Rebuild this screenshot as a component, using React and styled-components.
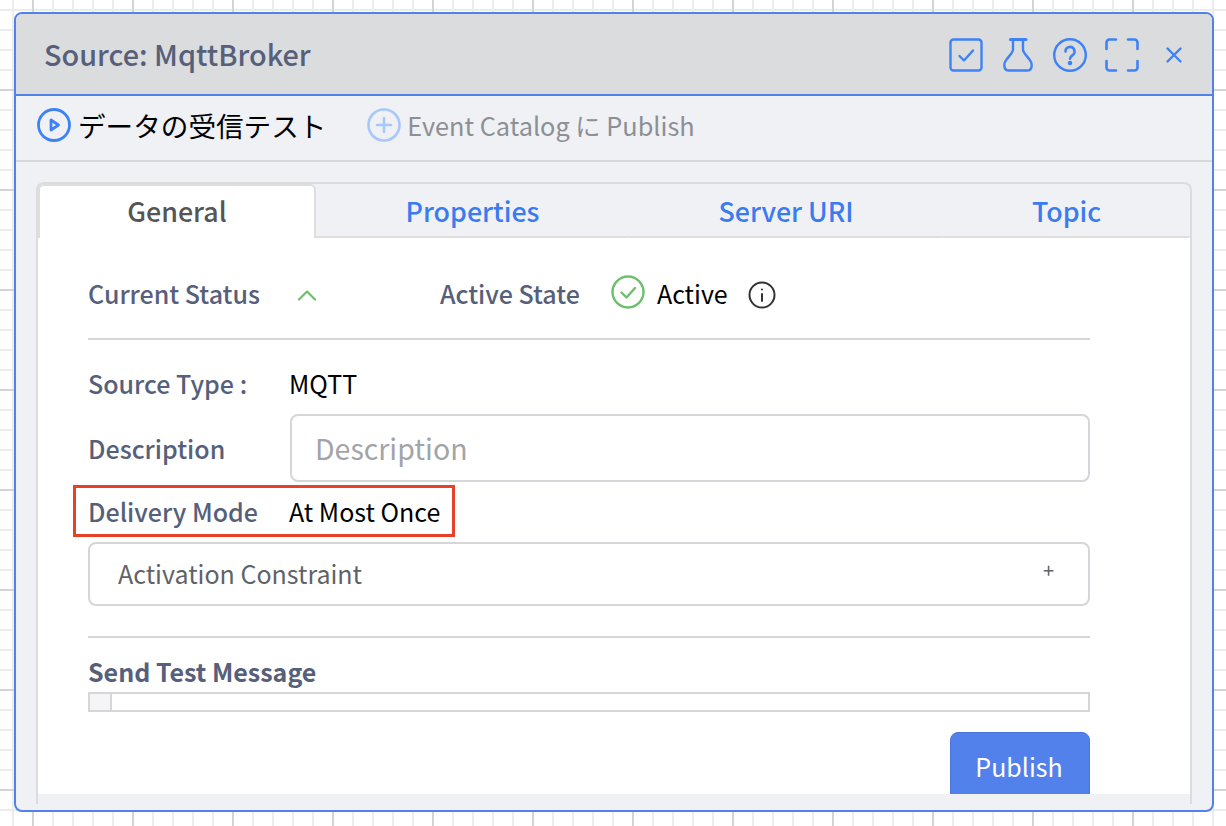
import React from 'react';
import styled, { createGlobalStyle } from 'styled-components';

const Global = createGlobalStyle`
  html, body { margin: 0; padding: 0; height: 100%; }
  body {
    width: 1226px; height: 826px; overflow: hidden;
    background-color: #fff;
    background-image:
      linear-gradient(to right, #d4d4d4 2px, transparent 2px),
      linear-gradient(to bottom, #d4d4d4 2px, transparent 2px),
      linear-gradient(to right, #ececec 2px, transparent 2px),
      linear-gradient(to bottom, #ececec 2px, transparent 2px);
    background-size: 100px 100px, 100px 100px, 20px 20px, 20px 20px;
    background-position: 32px 0, 0 89px, 12px 0, 0 9px;
    font-family: "Noto Sans CJK JP", "Noto Sans", sans-serif;
  }
`;

const Page = styled.div`
  padding: 12px 0 0 14px;
`;

const Panel = styled.section`
  width: 1200px;
  height: 800px;
  box-sizing: border-box;
  border: 2px solid #5281ea;
  border-radius: 8px;
  background: #eff1f5;
  display: flex;
  flex-direction: column;
  overflow: hidden;
`;

const Header = styled.header`
  height: 82px;
  flex: none;
  box-sizing: border-box;
  background: #dadcde;
  border-bottom: 2px solid #5281ea;
  display: flex;
  align-items: center;
  justify-content: space-between;
  padding: 0 21px 0 28px;
`;

const Title = styled.h1`
  margin: 0 0 2px;
  font-size: 28.8px;
  font-weight: 500;
  color: #56607a;
`;

const HeaderIcons = styled.div`
  display: flex;
  align-items: center;
  gap: 18px;
  color: #3f82f7;
  padding-top: 2px;
`;

const IconBtn = styled.span`
  display: flex;
  width: 34px;
  height: 34px;
  align-items: center;
  justify-content: center;
`;

const Toolbar = styled.div`
  height: 66px;
  flex: none;
  box-sizing: border-box;
  border-bottom: 2px solid #d5d9dc;
  display: flex;
  align-items: center;
  padding: 0 0 6px 21px;
  gap: 41px;
`;

const ToolAction = styled.div`
  display: flex;
  align-items: center;
  gap: ${p => (p.$disabled ? 6 : 7)}px;
  line-height: 34px;
  color: ${p => (p.$disabled ? '#8c8f94' : '#000')};
`;

const ActionLabel = styled.span`
  font-size: ${p => p.$size}px;
`;

const TabBox = styled.div`
  margin: 20px 20px 6px;
  flex: 1;
  min-height: 0;
  box-sizing: border-box;
  border: 2px solid #dcdcdc;
  border-bottom: 0;
  border-radius: 8px 8px 0 0;
  display: flex;
  flex-direction: column;
`;

const TabRow = styled.div`
  display: flex;
  height: 54px;
  flex: none;
`;

const Tab = styled.div`
  flex: none;
  width: ${p => p.$w}px;
  box-sizing: border-box;
  display: flex;
  align-items: center;
  justify-content: center;
  font-size: 26.8px;
  font-weight: 500;
  padding-bottom: ${p => (p.$active ? '4px' : 0)};
  color: ${p => (p.$active ? '#555' : '#3b7bf0')};
  background: ${p => (p.$active ? '#fff' : 'transparent')};
  border-radius: ${p => (p.$active ? '6px 6px 0 0' : '0 0 2px 0')};
  border-style: solid;
  border-color: #dedede;
  border-width: ${p => (p.$active ? '2px 2px 0 2px' : '0 0 2px 0')};
`;

const TabBody = styled.div`
  background: #fff;
  height: 556px;
  flex: none;
  box-sizing: border-box;
  padding: 37px 100px 0 50px;
  position: relative;
  overflow: hidden;
`;

const StatusRow = styled.div`
  display: flex;
  align-items: center;
  height: 36px;
  padding-bottom: 27px;
  border-bottom: 2px solid #d5d6d9;
`;

const Label = styled.span`
  flex: none;
  font-size: 25px;
  font-weight: ${p => p.$weight || 500};
  color: #56607a;
  width: ${p => (p.$w ? `${p.$w}px` : 'auto')};
`;

const ActiveLabel = styled(Label)`
  margin-left: 123px;
`;

const Value = styled.span`
  font-size: 25px;
  color: #000;
`;

const ActiveValue = styled(Value)`
  margin-left: 12px;
`;

const CheckIcon = styled.svg`
  margin-left: 31px;
  margin-bottom: 2px;
`;

const InfoIcon = styled.svg`
  margin-left: 20px;
  margin-top: 4px;
`;

const Chevron = styled.svg`
  margin-top: 3px;
`;

const Row = styled.div`
  display: flex;
  align-items: center;
  height: ${p => p.$h}px;
  margin-top: ${p => p.$mt || 0}px;
`;

const DescInput = styled.div`
  flex: 1;
  height: 68px;
  box-sizing: border-box;
  border: 2px solid #d5d6d9;
  border-radius: 8px;
  display: flex;
  align-items: center;
  padding: 0 0 2px 23px;
  font-size: 28.5px;
  color: #a2a4a8;
`;

const Callout = styled.div`
  position: absolute;
  left: 35px;
  top: 247px;
  width: 382px;
  height: 52px;
  box-sizing: border-box;
  border: 3px solid #e8412a;
`;

const Collapse = styled.div`
  height: 64px;
  margin-top: 1px;
  box-sizing: border-box;
  border: 2px solid #d5d6d9;
  border-radius: 8px;
  display: flex;
  align-items: center;
  justify-content: space-between;
  padding: 0 34px 2px 28px;
  font-size: 25px;
  color: #5f6368;
`;

const Plus = styled.span`
  font-size: 20px;
  line-height: 1;
  color: #5f6368;
  margin-bottom: 6px;
`;

const Divider = styled.div`
  height: 2px;
  background: #d5d6d9;
  margin-top: 30px;
`;

const SectionTitle = styled.div`
  margin-top: 13px;
  height: 41px;
  box-sizing: border-box;
  padding-bottom: 2px;
  display: flex;
  align-items: center;
`;

const MsgBox = styled.div`
  height: 20px;
  box-sizing: border-box;
  border: 2px solid #d5d6d9;
  display: flex;
`;

const Gutter = styled.div`
  width: 20px;
  background: #f5f5f5;
  border-right: 2px solid #d5d6d9;
`;

const ButtonRow = styled.div`
  display: flex;
  justify-content: flex-end;
  margin-top: 20px;
`;

const Publish = styled.button`
  width: 140px;
  height: 70px;
  flex: none;
  border: 1px solid #4a76de;
  border-radius: 8px;
  background: #5381ec;
  color: #fff;
  font-family: inherit;
  font-size: 25px;
  padding: 0 2px 3px 0;
`;

const S = { fill: 'none', stroke: 'currentColor', strokeLinecap: 'round', strokeLinejoin: 'round' };

const App = () => (
  <Page>
    <Global />
    <Panel>
      <Header>
        <Title>Source: MqttBroker</Title>
        <HeaderIcons>
          <IconBtn>
            <svg width="34" height="34" viewBox="0 0 34 34" {...S} strokeWidth="2.4">
              <rect x="1.5" y="1.5" width="31" height="31" rx="3" />
              <path d="M10.500 18l4.500 4.500L24 12.500" />
            </svg>
          </IconBtn>
          <IconBtn>
            <svg width="34" height="34" viewBox="0 0 34 34" {...S} strokeWidth="2.4">
              <path d="M9.500 1.500h15.500" strokeWidth="3" />
              <path d="M12 2v9.500c0 3-3 5.500-6.500 10C2.500 25 2 32.500 8 32.500h18c6 0 5.500-7.500 2.500-11-3.500-4.500-6.500-7-6.500-10V2" />
            </svg>
          </IconBtn>
          <IconBtn>
            <svg width="34" height="34" viewBox="0 0 34 34" {...S} strokeWidth="2.4">
              <circle cx="17" cy="17" r="15.800" />
              <path d="M12.500 13.500a4.500 4.500 0 1 1 6.800 3.800c-1.500 1-2.300 1.800-2.300 3.500" strokeWidth="2.600" />
              <circle cx="17" cy="25" r="1.100" fill="currentColor" />
            </svg>
          </IconBtn>
          <IconBtn>
            <svg width="34" height="34" viewBox="0 0 34 34" {...S} strokeWidth="2.6">
              <path d="M1.500 11V4.500a3 3 0 0 1 3-3H11M23 1.500h6.500a3 3 0 0 1 3 3V11M32.500 23v6.500a3 3 0 0 1-3 3H23M11 32.500H4.500a3 3 0 0 1-3-3V23" />
            </svg>
          </IconBtn>
          <IconBtn>
            <svg width="18" height="18" viewBox="0 0 18 18" {...S} strokeWidth="2.4">
              <path d="M2.500 2.500l13 13M15.500 2.500l-13 13" />
            </svg>
          </IconBtn>
        </HeaderIcons>
      </Header>
      <Toolbar>
        <ToolAction>
          <svg width="34" height="34" viewBox="0 0 34 34" fill="none" stroke="#3f82f7" strokeWidth="2.800" strokeLinejoin="round">
            <circle cx="17" cy="17" r="15.500" />
            <path d="M14 12v10l7.500-5z" />
          </svg>
          <ActionLabel $size={27.6}>データの受信テスト</ActionLabel>
        </ToolAction>
        <ToolAction $disabled>
          <svg width="34" height="34" viewBox="0 0 34 34" fill="none" stroke="#a8c7fb" strokeWidth="2.600" strokeLinecap="round">
            <circle cx="17" cy="17" r="15.500" />
            <path d="M17 10v14M10 17h14" />
          </svg>
          <ActionLabel $size={25.3}>Event Catalog に Publish</ActionLabel>
        </ToolAction>
      </Toolbar>
      <TabBox>
        <TabRow>
          <Tab $active $w={278}>General</Tab>
          <Tab $w={313}>Properties</Tab>
          <Tab $w={314}>Server URI</Tab>
          <Tab $w={247}>Topic</Tab>
        </TabRow>
        <TabBody>
          <StatusRow>
            <Label $w={209}>Current Status</Label>
            <Chevron width="20" height="12" viewBox="0 0 20 12" fill="none" stroke="#6dbf6d" strokeWidth="2.200" strokeLinecap="round" strokeLinejoin="round">
              <path d="M2 10.500l8-8 8 8" />
            </Chevron>
            <ActiveLabel>Active State</ActiveLabel>
            <CheckIcon width="34" height="34" viewBox="0 0 34 34" fill="none" stroke="#6dbf6d" strokeWidth="2.400" strokeLinecap="round" strokeLinejoin="round">
              <circle cx="17" cy="17" r="15.500" />
              <path d="M10.500 17.500l5 5 8.500-9.500" />
            </CheckIcon>
            <ActiveValue>Active</ActiveValue>
            <InfoIcon width="28" height="28" viewBox="0 0 28 28" fill="none" stroke="#333" strokeWidth="2" strokeLinecap="round">
              <circle cx="14" cy="14" r="12.500" />
              <path d="M14 13v7" />
              <circle cx="14" cy="8.500" r="1" fill="#333" stroke="none" />
            </InfoIcon>
          </StatusRow>
          <Row $h={60} $mt={13}>
            <Label $w={201}>Source Type :</Label>
            <Value>MQTT</Value>
          </Row>
          <Row $h={68} $mt={1}>
            <Label $w={202}>Description</Label>
            <DescInput>Description</DescInput>
          </Row>
          <Row $h={60} $mt={-1}>
            <Label $w={201}>Delivery Mode</Label>
            <Value>At Most Once</Value>
          </Row>
          <Callout />
          <Collapse>
            <span>Activation Constraint</span>
            <Plus>+</Plus>
          </Collapse>
          <Divider />
          <SectionTitle>
            <Label $weight={700}>Send Test Message</Label>
          </SectionTitle>
          <MsgBox><Gutter /></MsgBox>
          <ButtonRow>
            <Publish>Publish</Publish>
          </ButtonRow>
        </TabBody>
      </TabBox>
    </Panel>
  </Page>
);

export default App;
